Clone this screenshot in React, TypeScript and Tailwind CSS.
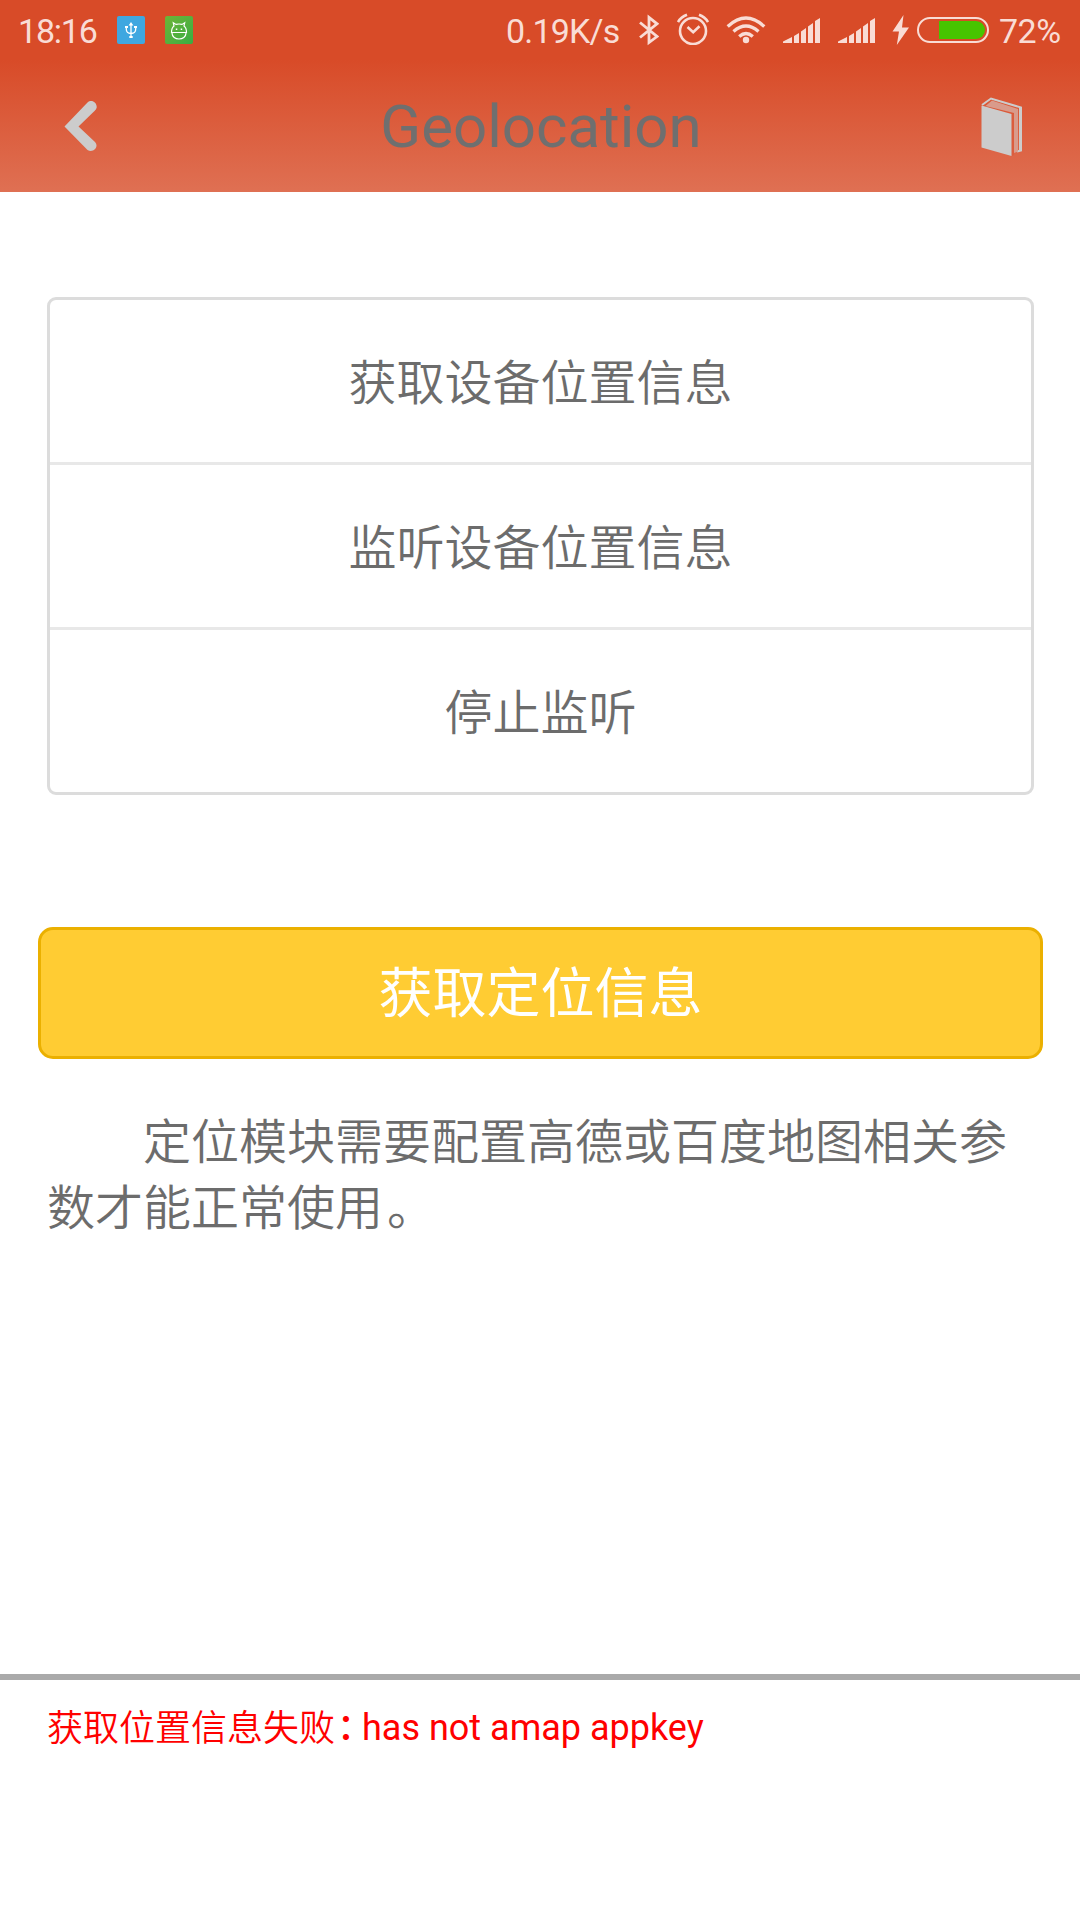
const ink = '#f9dcd5';

function StatusBar() {
  return (
    <div className="flex h-[60px] items-start text-[#f9dcd5]">
      <span className="ml-[18px] mt-[11px] w-[99px] whitespace-nowrap text-[34px] leading-[40px] tracking-[-1.2px]">18:16</span>
      <svg className="mt-4 h-7 w-7 rounded-[2px] bg-[#3fa7e0]" viewBox="0 0 28 28" fill="none" stroke="#fff" strokeWidth="1.3">
        <path d="M14 8v12M9.300 11v2q0 4.500 4.700 4.500t4.700-4.500v-2" />
        <path d="M14 6l2.400 3.400h-4.800zM8 10h3v2H8zM17 10h3v2h-3zM12.300 20h3.400v2h-3.400z" fill="#fff" stroke="none" />
      </svg>
      <svg className="ml-5 mt-4 h-7 w-7 rounded-[2px] bg-linear-to-br from-[#6cb437] to-[#35ad43]" viewBox="0 0 28 28" fill="none" stroke="#fff" strokeWidth="1.2">
        <path d="M6.500 16.500C6.500 13 7.500 11 9 10L8.300 6.800L11 8.400Q14 7.600 17 8.400L19.700 6.800L19 10C20.500 11 21.500 13 21.500 16.500zM7 17C7 25 21 25 21 17" />
        <path d="M10.800 12.500h1.500v1.500h-1.500zM15.700 12.500h1.500v1.500h-1.500z" fill="#fff" stroke="none" />
      </svg>
      <span className="ml-[313px] mt-[11px] w-[133px] whitespace-nowrap text-[34px] leading-[40px] tracking-[-0.8px]">0.19K/s</span>
      <svg className="mt-[14px] h-8 w-5" viewBox="0 0 20 32" fill="none" stroke={ink} strokeWidth="2.800">
        <path d="M1 8.500L18 22.500L10 28.500V3.500L18 9.800L1 23.500" />
      </svg>
      <svg className="ml-[18px] mt-[13px] h-8 w-8" viewBox="0 0 32 32" fill="none" stroke={ink} strokeWidth="2.600">
        <circle cx="16" cy="18" r="13" />
        <path d="M10.500 14L16.200 19.300L22.500 13.300M1 9Q4 4 10 1.800M31 9Q28 4 22 1.800" />
      </svg>
      <svg className="ml-[17px] mt-4 h-7 w-10" viewBox="0 0 40 28" fill="none" stroke={ink} strokeWidth="3.300">
        <circle cx="20" cy="24" r="3.200" fill={ink} stroke="none" />
        <path d="M1.700 10.500Q20-6.500 38.300 10.500M7.500 15.500Q20 4.500 32.500 15.500M13.200 20.500Q20 14.500 26.800 20.500" />
      </svg>
      <Signal className="ml-[17px]" />
      <Signal className="ml-[18px]" />
      <svg className="ml-[17px] mt-[15px] h-[30px] w-[18px]" viewBox="0 0 18 30" fill={ink}>
        <path d="M11.500 0L.5 16.500H7L4.800 30L17 12.500H10z" />
      </svg>
      <div className="ml-[7px] mt-[17px] flex h-[26px] w-[72px] justify-end rounded-full border-2 border-[#f9dcd5] p-[2px]">
        <div className="w-[46px] rounded-r-full bg-[#47c400]" />
      </div>
      <span className="ml-[10px] mt-[11px] whitespace-nowrap text-[34px] leading-[40px] tracking-[-0.5px]">72%</span>
    </div>
  );
}

function Signal({ className }: { className: string }) {
  return (
    <svg className={`${className} mt-[18px] h-[25px] w-[37px] shrink-0`} viewBox="0 0 37 25" fill={ink}>
      <path d="M0 25v-1.500L9 19v6zM11 18l5-3v10h-5zM18 13.500l5-3.500v15h-5zM25 8.500l5-3.500v20h-5zM32 3l5-3v25h-5z" />
    </svg>
  );
}

function TitleBar() {
  return (
    <div className="flex h-[132px] items-start">
      <svg className="ml-16 mt-10 h-[52px] w-[33px]" viewBox="0 0 33 52" fill="#ccc">
        <path d="M.5 26.500L23.500 2.500C27.500-1 33 2.500 32.700 7.500Q32.500 9 30.500 11L14.500 26.500L31 42C35.500 47 29 53.500 23.500 50z" />
      </svg>
      <h1 className="ml-[100px] w-[688px] pt-[27px] text-center text-[60px] leading-[80px] text-[#6f6f6f]">Geolocation</h1>
      <svg className="ml-[96px] mt-[37px] h-[60px] w-[42px]" viewBox="0 0 42 60">
        <path d="M1 8L10 1.500L40 10.500V53.500L36 54.500" fill="none" stroke="#ccc" strokeWidth="2" />
        <path d="M38 11h3v42l-3 1z" fill="#ccc" />
        <path d="M4.500 9L11 3.500L37 12V54.500L33 56V16z" fill="#d99b8b" />
        <path d="M30.500 17L33 16V58L30.500 59z" fill="#db5d3e" />
        <path d="M.5 8.500L30.500 17V59L.5 50.500z" fill="#ccc" />
      </svg>
    </div>
  );
}

const actions = ['获取设备位置信息', '监听设备位置信息', '停止监听'];

export default function App() {
  return (
    <div className="flex h-[1920px] w-[1080px] flex-col overflow-hidden bg-white font-['Roboto','Noto_Sans_CJK_SC',sans-serif] text-[#6c6c6c]" lang="zh-CN">
      <header className="h-[192px] shrink-0 bg-[linear-gradient(180deg,#d84b28_0px,#d84b28_60px,#df7053_192px)]">
        <StatusBar />
        <TitleBar />
      </header>

      <ul className="ml-[47px] mr-[46px] mt-[105px] divide-y-3 divide-[#e8e8e8] rounded-[9px] border-3 border-[#dcdcdc] font-[350]">
        {actions.map((label) => (
          <li key={label} className="box-content flex h-[162px] items-center justify-center">
            <span className="pt-[5px] text-[48px] leading-[72px]">{label}</span>
          </li>
        ))}
      </ul>

      <button className="ml-[38px] mr-[37px] mt-[132px] h-[132px] shrink-0 rounded-[15px] border-3 border-[#ebb000] bg-[#ffcc33] pt-[3px] text-[54px] font-normal leading-[80px] text-white">
        获取定位信息
      </button>

      <p className="mx-[47px] mt-[51px] h-[132px] indent-[96px] text-[48px] font-[350] leading-[66px]">
        定位模块需要配置高德或百度地图相关参数才能正常使<span className="tracking-[4px]">用</span>。
      </p>

      <section className="mt-[432px] flex flex-1 items-start border-t-[6px] border-[#aaa] px-[47px] pt-[21px] text-[36px] leading-[54px] text-[#ff0000]">
        <span className="pt-px font-[350]">获取位置信息失败</span>
        <span className="w-[27px] pl-[2px] font-medium tracking-[-11px]">：</span>
        <span>has not amap appkey</span>
      </section>
    </div>
  );
}
